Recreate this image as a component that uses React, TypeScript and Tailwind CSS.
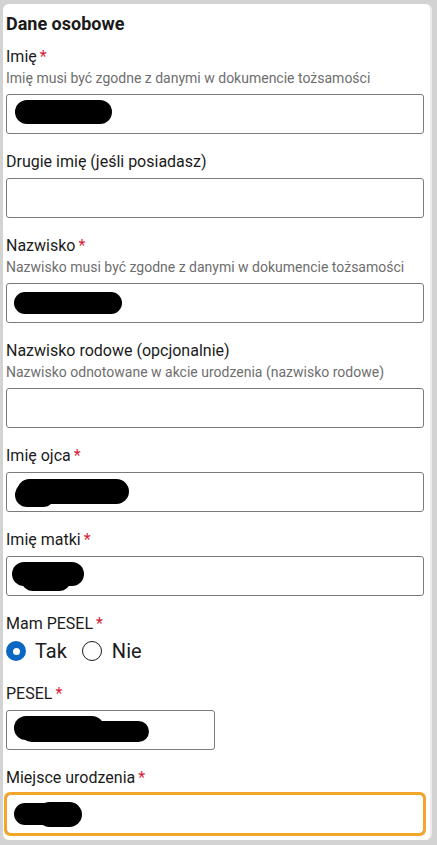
import React from "react";

type Blob = { left: number; top: number; w: number; h: number };

function Req() {
  return <span className="ml-[3px] text-[#d81e3a]">*</span>;
}

function Label({ text, req }: { text: string; req?: boolean }) {
  return (
    <div className="text-[16px] leading-[20px] text-[#1b1b1b]">
      {text}
      {req && <Req />}
    </div>
  );
}

function Helper({ text }: { text: string }) {
  return <div className="mt-[2px] text-[14px] leading-[19px] text-[#6e6e6e]">{text}</div>;
}

function Redact({ b }: { b: Blob }) {
  return (
    <div
      className="absolute rounded-full bg-black blur-[0.6px]"
      style={{ left: b.left, top: b.top, width: b.w, height: b.h }}
    />
  );
}

function Input({ blobs, width, focused }: { blobs?: Blob[]; width?: string; focused?: boolean }) {
  return (
    <div
      className={
        "relative mt-[6px] h-[40px] rounded-[3px] border border-[#7b7b7b] bg-white " +
        (width ?? "w-[418px]") +
        (focused ? " outline-[3px] outline-solid outline-[#f4a62a] outline-offset-[-1px] rounded-[4px]" : "")
      }
    >
      {blobs?.map((b, i) => <Redact key={i} b={b} />)}
    </div>
  );
}

function Field({
  label,
  req,
  helper,
  blobs,
  width,
  focused,
}: {
  label: string;
  req?: boolean;
  helper?: string;
  blobs?: Blob[];
  width?: string;
  focused?: boolean;
}) {
  return (
    <div className="mb-[18px]">
      <Label text={label} req={req} />
      {helper && <Helper text={helper} />}
      <Input blobs={blobs} width={width} focused={focused} />
    </div>
  );
}

export default function App() {
  return (
    <div
      className="flex h-[845px] w-[437px] bg-[#d3d3d3] pb-[5px] pl-[3px] pr-[5px] pt-[4px]"
      style={{ fontFamily: "Roboto, 'Noto Sans', sans-serif" }}
    >
      <div className="flex-1 overflow-hidden rounded-[6px] border-r-[2px] border-[#ececec] bg-white pl-[3px] pt-[8px]">
        <h2 className="mb-[11px] text-[18px] font-bold leading-[24px] text-[#1a1a1a]">Dane osobowe</h2>

        <Field
          label="Imię"
          req
          helper="Imię musi być zgodne z danymi w dokumencie tożsamości"
          blobs={[{ left: 8, top: 5, w: 97, h: 24 }]}
        />
        <Field label="Drugie imię (jeśli posiadasz)" />
        <Field
          label="Nazwisko"
          req
          helper="Nazwisko musi być zgodne z danymi w dokumencie tożsamości"
          blobs={[{ left: 7, top: 8, w: 108, h: 22 }]}
        />
        <Field
          label="Nazwisko rodowe (opcjonalnie)"
          helper="Nazwisko odnotowane w akcie urodzenia (nazwisko rodowe)"
        />
        <Field
          label="Imię ojca"
          req
          blobs={[
            { left: 10, top: 6, w: 112, h: 25 },
            { left: 8, top: 10, w: 40, h: 24 },
          ]}
        />
        <Field
          label="Imię matki"
          req
          blobs={[
            { left: 5, top: 5, w: 72, h: 24 },
            { left: 14, top: 10, w: 50, h: 24 },
          ]}
        />

        <div className="mb-[20px]">
          <Label text="Mam PESEL" req />
          <div className="mt-[4px] flex h-[26px] items-center text-[20px] text-[#1b1b1b]">
            <span className="flex h-[20px] w-[20px] items-center justify-center rounded-full bg-[#0b67c4]">
              <span className="h-[7px] w-[7px] rounded-full bg-white" />
            </span>
            <span className="ml-[9px]">Tak</span>
            <span className="ml-[15px] h-[20px] w-[20px] rounded-full border-[1.5px] border-[#1b1b1b]" />
            <span className="ml-[10px]">Nie</span>
          </div>
        </div>

        <Field
          label="PESEL"
          req
          width="w-[209px]"
          blobs={[
            { left: 7, top: 5, w: 90, h: 24 },
            { left: 14, top: 10, w: 128, h: 21 },
          ]}
        />
        <div>
          <Label text="Miejsce urodzenia" req />
          <Input
            focused
            blobs={[
              { left: 7, top: 8, w: 46, h: 22 },
              { left: 30, top: 7, w: 45, h: 25 },
            ]}
          />
        </div>
      </div>
    </div>
  );
}
